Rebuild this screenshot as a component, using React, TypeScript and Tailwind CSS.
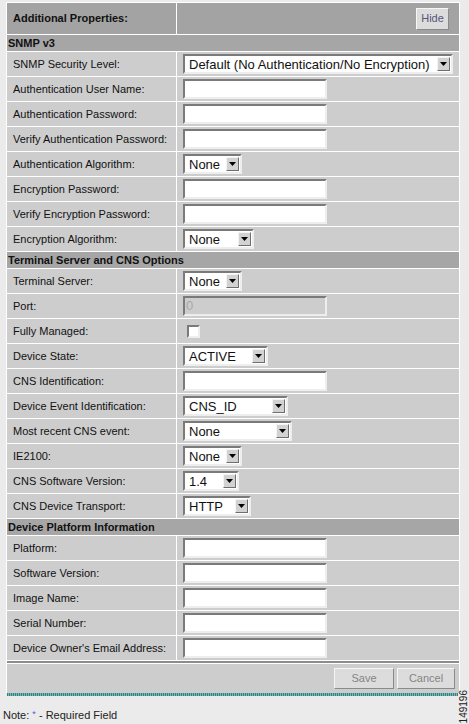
const font = "font-['Liberation_Sans',Arial,sans-serif]";

type Field =
  | { label: string; kind: "input" }
  | { label: string; kind: "disabled"; value: string }
  | { label: string; kind: "check" }
  | { label: string; kind: "select"; value: string; width: string };

const sections: { title: string; rows: Field[] }[] = [
  {
    title: "SNMP v3",
    rows: [
      { label: "SNMP Security Level:", kind: "select", value: "Default (No Authentication/No Encryption)", width: "w-[270px]" },
      { label: "Authentication User Name:", kind: "input" },
      { label: "Authentication Password:", kind: "input" },
      { label: "Verify Authentication Password:", kind: "input" },
      { label: "Authentication Algorithm:", kind: "select", value: "None", width: "w-[59px]" },
      { label: "Encryption Password:", kind: "input" },
      { label: "Verify Encryption Password:", kind: "input" },
      { label: "Encryption Algorithm:", kind: "select", value: "None", width: "w-[71px]" },
    ],
  },
  {
    title: "Terminal Server and CNS Options",
    rows: [
      { label: "Terminal Server:", kind: "select", value: "None", width: "w-[59px]" },
      { label: "Port:", kind: "disabled", value: "0" },
      { label: "Fully Managed:", kind: "check" },
      { label: "Device State:", kind: "select", value: "ACTIVE", width: "w-[85px]" },
      { label: "CNS Identification:", kind: "input" },
      { label: "Device Event Identification:", kind: "select", value: "CNS_ID", width: "w-[105px]" },
      { label: "Most recent CNS event:", kind: "select", value: "None", width: "w-[109px]" },
      { label: "IE2100:", kind: "select", value: "None", width: "w-[59px]" },
      { label: "CNS Software Version:", kind: "select", value: "1.4", width: "w-[56px]" },
      { label: "CNS Device Transport:", kind: "select", value: "HTTP", width: "w-[68px]" },
    ],
  },
  {
    title: "Device Platform Information",
    rows: [
      { label: "Platform:", kind: "input" },
      { label: "Software Version:", kind: "input" },
      { label: "Image Name:", kind: "input" },
      { label: "Serial Number:", kind: "input" },
      { label: "Device Owner's Email Address:", kind: "input" },
    ],
  },
];

export default function App() {
  return (
    <div className={`relative h-[724px] w-[469px] overflow-hidden bg-[#ebebeb] text-[#111] ${font}`}>
      <div className="ml-[6px] mt-[2px] flex w-[454px] flex-col gap-px bg-white px-px pt-px">
        <div className="grid h-[31px] grid-cols-[169px_1fr] gap-px">
          <div className="flex items-center bg-[#a3a3a3] pl-[6px] text-[11px] font-bold">
            Additional Properties:
          </div>
          <div className="flex items-center justify-end bg-[#a3a3a3] pr-[10px]">
            <Button className="h-[22px] w-[33px] text-[#55557a]">Hide</Button>
          </div>
        </div>

        {sections.map((s) => (
          <Section key={s.title} title={s.title} rows={s.rows} />
        ))}

        <div className="h-[2px] bg-[#8c8c8c]" />
        <div className="flex h-[29px] items-center justify-end gap-[3px] bg-[#cdcdcd] pr-[4px]">
          <Button className="h-[21px] w-[60px] text-[#858585]">Save</Button>
          <Button className="h-[21px] w-[58px] text-[#858585]">Cancel</Button>
        </div>
      </div>
      <div className="ml-[7px] h-[3px] w-[451px] bg-[repeating-linear-gradient(90deg,#2f8585_0px,#2f8585_1px,#7fb5b5_1px,#7fb5b5_2px)]" />

      <p className="ml-[3px] mt-[13px] text-[11px] leading-[13px] text-[#222]">
        Note: <span className="relative -top-[2px] text-[9px] text-[#5555ee]">*</span> - Required Field
      </p>

      <div className="absolute bottom-[1px] right-[0px] rotate-180 text-[10px] leading-none text-[#222] [writing-mode:vertical-rl]">
        149196
      </div>
    </div>
  );
}

function Section(props: { title: string; rows: Field[] }) {
  return (
    <>
      <div className="flex h-[16px] items-center bg-[#a6a6a6] pl-px text-[11px] font-bold">
        {props.title}
      </div>
      {props.rows.map((row) => (
        <div key={row.label} className="grid h-[24px] grid-cols-[169px_1fr] gap-px">
          <div className="flex items-center bg-[#cdcdcd] pl-[6px] text-[11px]">{row.label}</div>
          <div className="flex items-center bg-[#cdcdcd] pl-[6px]">
            <Control field={row} />
          </div>
        </div>
      ))}
    </>
  );
}

function Control(props: { field: Field }) {
  const f = props.field;
  if (f.kind === "input") {
    return (
      <div className="h-[20px] w-[144px] border-2 border-b-[#eeeeee] border-l-[#7a7a7a] border-r-[#eeeeee] border-t-[#7a7a7a] bg-white" />
    );
  }
  if (f.kind === "disabled") {
    return (
      <div className="flex h-[20px] w-[144px] items-center border-2 border-b-[#eeeeee] border-l-[#7a7a7a] border-r-[#eeeeee] border-t-[#7a7a7a] bg-[#cdcdcd] pl-[1px] text-[13px] text-[#a8a8a8]">
        {f.value}
      </div>
    );
  }
  if (f.kind === "check") {
    return (
      <div className="ml-[4px] h-[13px] w-[13px] border-2 border-b-[#eeeeee] border-l-[#7a7a7a] border-r-[#eeeeee] border-t-[#7a7a7a] bg-white" />
    );
  }
  return <Select value={f.value} width={f.width} />;
}

function Select(props: { value: string; width: string }) {
  return (
    <div
      className={`flex h-[20px] items-center justify-between border-2 border-b-[#eeeeee] border-l-[#7a7a7a] border-r-[#eeeeee] border-t-[#7a7a7a] bg-white pl-[4px] pr-[1px] text-[13px] leading-none ${props.width}`}
    >
      <span className="whitespace-nowrap">{props.value}</span>
      <span className="flex h-[14px] w-[13px] items-center justify-center border border-b-[#6e6e6e] border-l-[#f4f4f4] border-r-[#6e6e6e] border-t-[#f4f4f4] bg-[#d2d2d2]">
        <svg width="7" height="4" viewBox="0 0 7 4">
          <path d="M0 0h7L3.5 4z" fill="#000" />
        </svg>
      </span>
    </div>
  );
}

function Button(props: { className: string; children: string }) {
  return (
    <div
      className={`flex items-center justify-center border border-b-[#8a8a8a] border-l-[#f6f6f6] border-r-[#8a8a8a] border-t-[#f6f6f6] bg-[#dcdcdc] text-[11px] ${props.className}`}
    >
      {props.children}
    </div>
  );
}
